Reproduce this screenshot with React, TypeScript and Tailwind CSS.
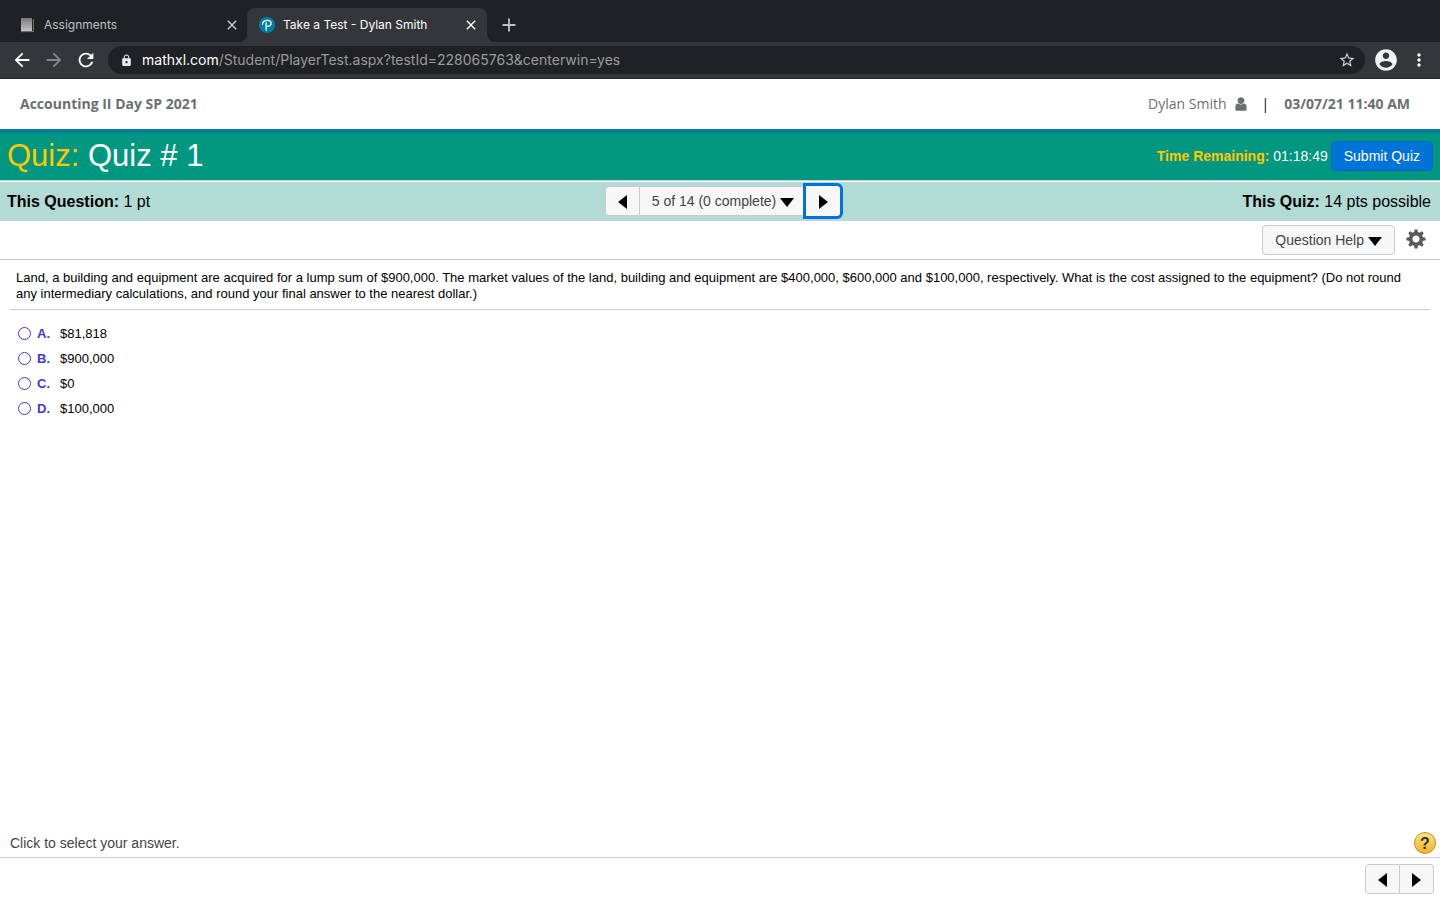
import { MdArrowBack, MdArrowForward, MdRefresh, MdLock, MdStarBorder, MdMoreVert, MdClose, MdAdd } from "react-icons/md";

const choices = [
  { letter: "A.", text: "$81,818" },
  { letter: "B.", text: "$900,000" },
  { letter: "C.", text: "$0" },
  { letter: "D.", text: "$100,000" },
];

function BookIcon() {
  return (
    <svg className="h-4 w-4 shrink-0" viewBox="0 0 16 16" aria-hidden="true">
      <defs>
        <linearGradient id="cover" x1="0" y1="0" x2="0" y2="1">
          <stop offset="0" stopColor="#7c7c7c" />
          <stop offset="1" stopColor="#c2c2c2" />
        </linearGradient>
      </defs>
      <path d="M1 1h12.500v14.500H1z" fill="#111" />
      <path d="M1 1h11v13H1z" fill="url(#cover)" />
      <path d="M1 14.700h12M13.300 2v13" fill="none" stroke="#b5b5b5" strokeWidth="0.700" />
    </svg>
  );
}

function PearsonIcon() {
  return (
    <svg className="h-4 w-4 shrink-0" viewBox="0 0 16 16" aria-hidden="true">
      <circle cx="8" cy="8" r="8" fill="#007fa3" />
      <path d="M3.600 7.200C3.600 4.700 5.600 3.300 8.100 3.300c2.500 0 4 1.200 4 3 0 1.900-1.700 3-4 3M7.100 5.600v5.400c0 .9.100 1.500.3 2.100" fill="none" stroke="#fff" strokeWidth="1.300" strokeLinecap="round" />
    </svg>
  );
}

function AccountIcon() {
  return (
    <svg className="h-[26px] w-[26px]" viewBox="0 0 24 24" fill="currentColor" aria-hidden="true">
      <path d="M12 2C6.480 2 2 6.480 2 12s4.480 10 10 10 10-4.480 10-10S17.520 2 12 2zm0 3c1.660 0 3 1.340 3 3s-1.340 3-3 3-3-1.340-3-3 1.340-3 3-3zm0 14.200c-2.500 0-4.710-1.280-6-3.220.03-1.990 4-3.080 6-3.080 1.990 0 5.970 1.090 6 3.080-1.290 1.940-3.500 3.220-6 3.220z" />
    </svg>
  );
}

function UserIcon() {
  return (
    <svg className="h-4 w-3" viewBox="0 0 1280 1792" fill="currentColor" aria-hidden="true">
      <path d="M1280 1399q0 109-62.500 187t-150.500 78h-854q-88 0-150.500-78t-62.500-187q0-85 8.500-160.500t31.500-152 58.500-131 94-89 134.500-34.500q131 128 313 128t313-128q76 0 134.500 34.500t94 89 58.500 131 31.500 152 8.500 160.500zM1024 512q0 159-112.500 271.500t-271.500 112.500-271.500-112.500-112.500-271.500 112.500-271.500 271.500-112.500 271.500 112.500 112.500 271.500z" />
    </svg>
  );
}

function GearIcon() {
  return (
    <svg className="h-5 w-5" viewBox="-10 -10 20 20" aria-hidden="true">
      <circle r="5.400" fill="none" stroke="#5a5a5a" strokeWidth="3.600" />
      {[0, 45, 90, 135, 180, 225, 270, 315].map((a) => (
        <path key={a} d="M-2-6.500 -1.300-9.600H1.300L2-6.500z" fill="#5a5a5a" transform={`rotate(${a})`} />
      ))}
    </svg>
  );
}

function Triangle({ dir }: { dir: "left" | "right" | "down" }) {
  if (dir === "down")
    return (
      <svg className="mt-0.5 h-[9px] w-3.5" viewBox="0 0 14 9" aria-hidden="true">
        <path d="M0 0h14L7 9z" fill="#000" />
      </svg>
    );
  return (
    <svg className="mt-0.5 h-3.5 w-[9px]" viewBox="0 0 9 14" aria-hidden="true">
      <path d={dir === "left" ? "M9 0v14L0 7z" : "M0 0v14L9 7z"} fill="#000" />
    </svg>
  );
}

function BrowserChrome() {
  return (
    <div className="bg-[#202124] font-[Inter,sans-serif]">
      <div className="flex h-[42px] items-end" role="tablist">
        <div className="flex h-[34px] w-[247px] items-center pr-[7px] pl-5 text-xs text-[#bdc1c6]">
          <BookIcon />
          <button role="tab" aria-selected="false" className="ml-2 flex-1 text-left">Assignments</button>
          <button aria-label="Close Assignments" className="text-[#d0d3d6]"><MdClose size={16} /></button>
        </div>
        <div className="relative flex h-[34px] w-60 items-center rounded-t-lg bg-[#35363a] pr-2 pl-3 text-xs text-white">
          <svg className="absolute bottom-0 -left-2 h-2 w-2" viewBox="0 0 8 8" aria-hidden="true"><path d="M8 0v8H0a8 8 0 0 0 8-8z" fill="#35363a" /></svg>
          <svg className="absolute -right-2 bottom-0 h-2 w-2" viewBox="0 0 8 8" aria-hidden="true"><path d="M0 0v8h8a8 8 0 0 1-8-8z" fill="#35363a" /></svg>
          <PearsonIcon />
          <button role="tab" aria-selected="true" className="ml-2 flex-1 text-left">Take a Test - Dylan Smith</button>
          <button aria-label="Close Take a Test"><MdClose size={16} /></button>
        </div>
        <button aria-label="New tab" className="ml-[11px] flex h-[34px] items-center text-[#bdc1c6]"><MdAdd size={22} /></button>
      </div>
      <div className="flex h-[37px] items-center border-b border-[#27282b] bg-[#35363a] px-[11px] text-white">
        <button aria-label="Back"><MdArrowBack size={22} /></button>
        <button aria-label="Forward" className="ml-2.5 text-[#86878a]"><MdArrowForward size={22} /></button>
        <button aria-label="Reload" className="ml-2.5"><MdRefresh size={22} /></button>
        <div className="ml-[11px] flex h-7 flex-1 items-center rounded-full bg-[#202124] px-3 text-sm">
          <MdLock size={13} className="text-[#e8eaed]" />
          <div className="ml-[9px] flex-1 text-[#9a9b9d]"><span className="text-white">mathxl.com</span>/Student/PlayerTest.aspx?testId=228065763&amp;centerwin=yes</div>
          <button aria-label="Bookmark" className="-mr-1 p-px text-[#d0d3d6]"><MdStarBorder size={18} /></button>
        </div>
        <button aria-label="Profile" className="ml-2 text-[#f1f3f4]"><AccountIcon /></button>
        <button aria-label="Menu" className="ml-2.5"><MdMoreVert size={20} /></button>
      </div>
    </div>
  );
}

export default function App() {
  return (
    <div className="flex min-h-screen flex-col bg-white font-['Liberation_Sans',Arial,sans-serif] text-black">
      <BrowserChrome />

      <header className="flex h-[50px] items-center justify-between pr-[30px] pl-5 font-['Open_Sans',sans-serif] text-sm text-[#6a7070]">
        <span className="font-bold">Accounting II Day SP 2021</span>
        <div className="flex items-center">
          <span>Dylan Smith</span>
          <span className="ml-2"><UserIcon /></span>
          <span className="mx-[15px] text-black">|</span>
          <span className="font-bold">03/07/21 11:40 AM</span>
        </div>
      </header>

      <div className="flex h-[52px] items-center justify-between border-t-4 border-b border-t-[#047a9c] border-b-[#c7cedd] bg-[#009780] px-[7px] pb-0.5 text-white">
        <h1 className="text-[31px] leading-none"><span className="text-[#ffc800]">Quiz:</span> Quiz # 1</h1>
        <div className="flex items-center text-sm">
          <span className="mr-[3px]"><strong className="text-[#ffc800]">Time Remaining:</strong> 01:18:49</span>
          <button className="h-[30px] rounded-sm border border-[#0064c2] bg-[#0073d9] px-3">Submit Quiz</button>
        </div>
      </div>

      <div className="mt-px grid h-[39px] grid-cols-[1fr_auto_1fr] items-center border-b border-[#c7cedd] bg-[#b2dbd5] px-[7px]">
        <div className="pt-0.5"><strong>This Question:</strong> 1 pt</div>
        <div className="ml-2 flex h-[30px] items-center text-sm text-[#444]">
          <button aria-label="Previous question" className="flex h-[30px] w-[35px] items-center justify-center rounded-l-sm border border-[#ccc] bg-[#f7f7f7]"><Triangle dir="left" /></button>
          <button className="flex h-[30px] items-center gap-1 border-y border-[#ccc] bg-[#f7f7f7] pr-[9px] pl-3">5 of 14 (0 complete) <Triangle dir="down" /></button>
          <button aria-label="Next question" className="flex h-9 w-10 items-center justify-center rounded-r-md border-3 border-[#0073d9] bg-[#f7f7f7]"><Triangle dir="right" /></button>
        </div>
        <div className="pt-0.5 pr-0.5 text-right"><strong>This Quiz:</strong> 14 pts possible</div>
      </div>

      <div className="flex h-[39px] items-center justify-end border-b border-[#c9ccd8] pr-3.5">
        <button className="flex h-[30px] items-center gap-1 rounded-sm border border-[#ccc] bg-[#f7f7f7] px-3 text-sm text-[#444]">Question Help <Triangle dir="down" /></button>
        <button aria-label="Settings" className="ml-[11px] pb-0.5"><GearIcon /></button>
      </div>

      <main className="flex-1 px-2.5 pt-2.5 text-[13px]">
        <p className="border-b border-[#c9ccd8] px-1.5 pb-[7px] leading-4">
          Land, a building and equipment are acquired for a lump sum of $900,000. The market values of the land, building and equipment are $400,000, $600,000 and $100,000, respectively. What is the cost assigned to the equipment? (Do not round any intermediary calculations, and round your final answer to the nearest dollar.)
        </p>
        <fieldset className="mt-[11px] pl-2" aria-label="Answer choices">
          {choices.map((c) => (
            <label key={c.letter} className="flex h-[25px] items-center">
              <input type="radio" name="answer" className="h-[13px] w-[13px] appearance-none rounded-full border border-[#3c3ccf] bg-white checked:bg-[#3c3ccf]" />
              <span className="ml-1.5 w-[23px] font-bold text-[#3c3ccf]">{c.letter}</span>
              <span>{c.text}</span>
            </label>
          ))}
        </fieldset>
      </main>

      <footer>
        <div className="flex h-[29px] items-center justify-between border-b border-[#c9ccd8] pr-1 pl-2.5 text-sm text-[#444]">
          <span>Click to select your answer.</span>
          <button aria-label="Help" className="flex h-[22px] w-[22px] items-center justify-center rounded-full border border-[#b9922d] bg-linear-to-b from-[#ffe37a] to-[#f5b31c] pt-0.5 text-base font-bold text-[#333]">?</button>
        </div>
        <div className="flex h-[42px] items-center justify-end pr-1.5">
          <button aria-label="Previous" className="flex h-[30px] w-[35px] items-center justify-center rounded-l-sm border border-[#ccc] bg-[#f7f7f7]"><Triangle dir="left" /></button>
          <button aria-label="Next" className="flex h-[30px] w-[34px] items-center justify-center rounded-r-sm border border-l-0 border-[#ccc] bg-[#f7f7f7]"><Triangle dir="right" /></button>
        </div>
      </footer>
    </div>
  );
}
